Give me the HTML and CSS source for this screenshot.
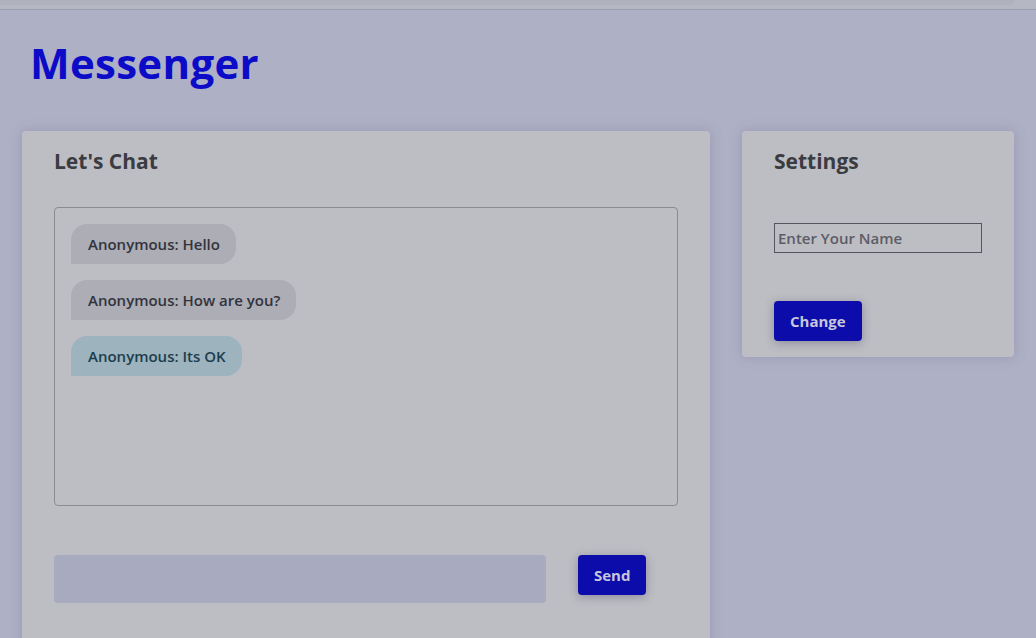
FILE: index.html
```html
<!DOCTYPE html>
<html>
<head>
<meta charset="utf-8">
<link rel="stylesheet" href="styles.css">
</head>
<body>
<div class="topbar"><div class="topbar-inner"></div></div>
<h1 class="title">Messenger</h1>
<main class="layout">
  <section class="card chat-card">
    <h2 class="card-title">Let's Chat</h2>
    <div class="messages">
      <div class="bubble">Anonymous: Hello</div>
      <div class="bubble">Anonymous: How are you?</div>
      <div class="bubble mine">Anonymous: Its OK</div>
    </div>
    <div class="composer">
      <input class="msg-input" type="text">
      <button class="btn">Send</button>
    </div>
  </section>
  <section class="card settings-card">
    <h2 class="card-title">Settings</h2>
    <input class="name-input" type="text" placeholder="Enter Your Name">
    <button class="btn">Change</button>
  </section>
</main>
</body>
</html>
```
FILE: styles.css
```css
* { box-sizing: border-box; }
html, body { margin: 0; padding: 0; }
body {
  background: #aeb0c5;
  font-family: "Open Sans", "Noto Sans", sans-serif;
  height: 638px;
  overflow: hidden;
}
.topbar {
  height: 10px;
  background: #b5b7c2;
  border-bottom: 1px solid #9b9bb0;
}
.topbar-inner {
  width: 1014px;
  height: 5px;
  background: #afb2bd;
  border-bottom-right-radius: 6px;
}
.title {
  margin: 0;
  padding: 26px 0 0 30px;
  height: 121px;
  font-size: 42px;
  font-weight: 700;
  color: #0b0bc8;
  line-height: 54px;
  letter-spacing: 0.3px;
}
.layout {
  display: flex;
  align-items: flex-start;
  gap: 32px;
  padding-left: 22px;
}
.card {
  background: #bdbec3;
  border-radius: 4px;
  box-shadow: 0 0 12px rgba(110, 110, 150, 0.35);
  padding: 16px 32px;
}
.chat-card {
  width: 688px;
  height: 520px;
}
.settings-card {
  width: 272px;
  height: 226px;
  display: flex;
  flex-direction: column;
  align-items: flex-start;
}
.card-title {
  margin: 0;
  font-size: 21px;
  font-weight: 700;
  color: #3b3b42;
  line-height: 28px;
}
.messages {
  margin-top: 32px;
  height: 299px;
  border: 1px solid #8a8a90;
  border-radius: 4px;
  padding: 16px;
  display: flex;
  flex-direction: column;
  align-items: flex-start;
  gap: 16px;
}
.bubble {
  height: 40px;
  line-height: 40px;
  padding: 0 16px 0 17px;
  background: #acadb5;
  border-radius: 16px 16px 16px 0;
  font-size: 15px;
  font-weight: 600;
  color: #33333d;
}
.bubble.mine {
  background: #9db3bd;
  color: #1c3d4d;
}
.composer {
  margin-top: 49px;
  display: flex;
  align-items: flex-start;
  gap: 32px;
}
.msg-input {
  width: 492px;
  height: 48px;
  background: #a8aac0;
  border: none;
  border-radius: 4px;
  outline: none;
}
.btn {
  height: 40px;
  padding: 0 16px;
  background: #0c0caa;
  color: #c6c6dc;
  border: none;
  border-radius: 4px;
  font-family: inherit;
  font-size: 15px;
  font-weight: 700;
  box-shadow: 0 2px 10px rgba(80, 80, 110, 0.45);
}
.name-input {
  margin-top: 48px;
  width: 208px;
  height: 30px;
  background: transparent;
  border: 1px solid #555560;
  border-radius: 0;
  padding: 0 3px;
  font-family: inherit;
  font-size: 15px;
  font-weight: 600;
  outline: none;
}
.name-input::placeholder { color: #5c5c66; }
.settings-card .btn {
  margin-top: 48px;
}
```
